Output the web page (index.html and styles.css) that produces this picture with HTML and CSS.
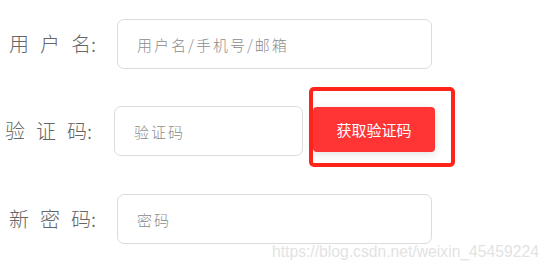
FILE: index.html
```html
<!DOCTYPE html>
<html lang="zh">
<head>
<meta charset="utf-8">
<link rel="stylesheet" href="styles.css">
</head>
<body>
<form class="form">
  <div class="row row-user">
    <label class="label"><span class="sp">用户</span>名:</label>
    <div class="input input-wide"><span class="ph">用户名/手机号/邮箱</span></div>
  </div>
  <div class="row row-code">
    <label class="label label-code"><span class="sp">验证</span>码:</label>
    <div class="input input-short"><span class="ph">验证码</span></div>
    <button type="button" class="btn">获取验证码</button>
  </div>
  <div class="row row-pass">
    <label class="label"><span class="sp">新密</span>码:</label>
    <div class="input input-wide"><span class="ph">密码</span></div>
  </div>
</form>
<div class="highlight"></div>
<div class="watermark">https://blog.csdn.net/weixin_45459224</div>
</body>
</html>
```
FILE: styles.css
```css
html, body {
  margin: 0;
  padding: 0;
  background: #fff;
  width: 547px;
  height: 272px;
  overflow: hidden;
}
body {
  font-family: "Noto Sans CJK SC", "Noto Sans", sans-serif;
  position: relative;
}
.form {
  display: flex;
  flex-direction: column;
  padding-top: 19px;
}
.row {
  display: flex;
  align-items: center;
}
.row-code {
  margin-top: 37px;
}
.row-pass {
  margin-top: 38px;
}
.label {
  width: 117px;
  padding-left: 9px;
  box-sizing: border-box;
  font-size: 20px;
  font-weight: 300;
  color: #666;
  white-space: nowrap;
  line-height: 1;
}
.sp {
  letter-spacing: 11px;
}
.label-code {
  width: 114px;
  padding-left: 5px;
}
.input {
  height: 50px;
  box-sizing: border-box;
  border: 1px solid #dcdcdc;
  border-radius: 7px;
  display: flex;
  align-items: center;
  padding-left: 19px;
}
.input-wide {
  width: 315px;
}
.input-short {
  width: 189px;
}
.ph {
  font-size: 15px;
  font-weight: 300;
  color: #8c8c8c;
  letter-spacing: 2px;
}
.btn {
  margin-left: 10px;
  width: 122px;
  height: 45px;
  margin-top: -3px;
  background: #ff3535;
  color: #fff;
  border: none;
  border-radius: 4px;
  font-family: "Noto Sans CJK SC", sans-serif;
  font-size: 15px;
  font-weight: 400;
  box-shadow: 0 2px 8px rgba(0,0,0,0.12);
  padding: 0;
}
.highlight {
  position: absolute;
  left: 309px;
  top: 87px;
  width: 146px;
  height: 80px;
  box-sizing: border-box;
  border: 4px solid #ff2419;
  border-radius: 5px;
}
.watermark {
  position: absolute;
  left: 272px;
  top: 243px;
  font-family: "Liberation Sans", Arial, sans-serif;
  font-size: 15.7px;
  color: #e3e3e3;
  white-space: nowrap;
}
```
